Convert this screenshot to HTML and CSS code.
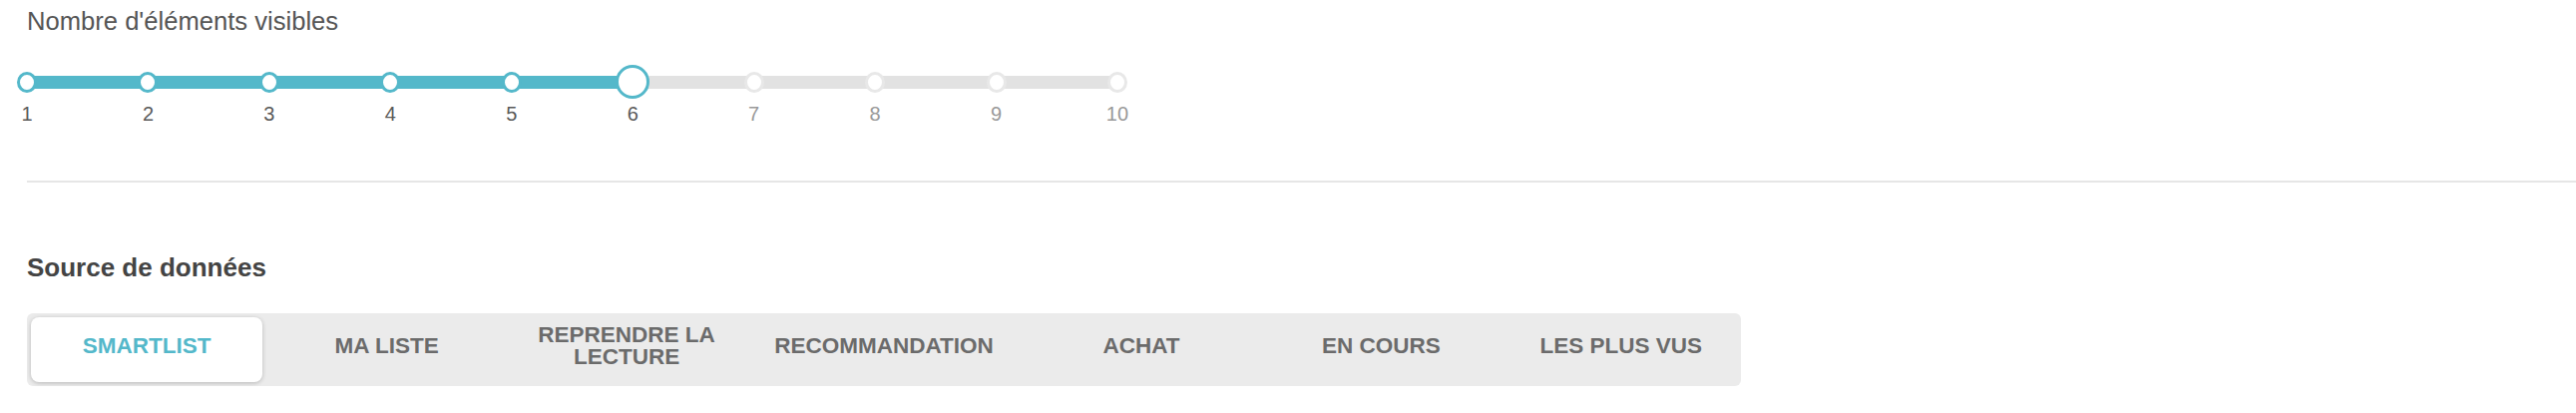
FILE: index.html
```html
<!DOCTYPE html>
<html lang="fr">
  <head>
    <meta charset="UTF-8" />
    <meta name="viewport" content="width=device-width, initial-scale=1.0" />
    <title>Réglages</title>
    <link rel="stylesheet" href="styles.css">
  </head>
  <body>
    <div class="panel">
      <p class="label">Nombre d'éléments visibles</p>
      <div class="slider">
        <div class="track"></div>
        <div class="track-fill" style="width: calc((100% - 40px) * 5 / 9)"></div>
        <div class="stops">
          <div class="stop done"><span class="dot"></span><span class="num">1</span></div>
          <div class="stop done"><span class="dot"></span><span class="num">2</span></div>
          <div class="stop done"><span class="dot"></span><span class="num">3</span></div>
          <div class="stop done"><span class="dot"></span><span class="num">4</span></div>
          <div class="stop done"><span class="dot"></span><span class="num">5</span></div>
          <div class="stop current"><span class="dot"></span><span class="num">6</span></div>
          <div class="stop"><span class="dot"></span><span class="num">7</span></div>
          <div class="stop"><span class="dot"></span><span class="num">8</span></div>
          <div class="stop"><span class="dot"></span><span class="num">9</span></div>
          <div class="stop"><span class="dot"></span><span class="num">10</span></div>
        </div>
      </div>

      <hr class="sep" />

      <h2>Source de données</h2>
      <div class="tabs">
        <div class="tab active"><span>Smartlist</span></div>
        <div class="tab"><span>Ma liste</span></div>
        <div class="tab"><span>Reprendre la lecture</span></div>
        <div class="tab"><span>Recommandation</span></div>
        <div class="tab"><span>Achat</span></div>
        <div class="tab"><span>En cours</span></div>
        <div class="tab"><span>Les plus vus</span></div>
      </div>
    </div>
  </body>
</html>
```

FILE: styles.css
```css
html,
body {
  font-family: 'Liberation Sans', Arial, 'Helvetica Neue', sans-serif;
  margin: 0;
  padding: 0;
  background: #fff;
}
.panel {
  padding: 6px 0 0 27px;
}
.label {
  margin: 0;
  font-size: 25.6px;
  line-height: 30px;
  color: #555;
}
.slider {
  position: relative;
  width: 1133px;
  margin: 29px 0 0 -20px;
}
.track,
.track-fill {
  position: absolute;
  left: 20px;
  top: 10.5px;
  height: 13px;
  background: #e2e2e2;
}
.track {
  right: 20px;
}
.track-fill {
  background: #54b8ca;
}
.stops {
  position: relative;
  display: flex;
  justify-content: space-between;
}
.stop {
  width: 40px;
  display: flex;
  flex-direction: column;
  align-items: center;
}
.dot {
  display: flex;
  align-items: center;
  justify-content: center;
  height: 34px;
}
.dot::before {
  content: '';
  box-sizing: border-box;
  width: 20px;
  height: 21px;
  border-radius: 50%;
  background: #fff;
  border: 3px solid #e8e8e8;
}
.done .dot::before {
  border-color: #54b8ca;
}
.current .dot::before {
  width: 34px;
  height: 34px;
  border: 3.5px solid #54b8ca;
}
.num {
  margin-top: 4px;
  font-size: 20px;
  line-height: 23px;
  color: #999;
}
.done .num,
.current .num {
  color: #5a5a5a;
}
.sep {
  margin: 55px 0 0 0;
  border: 0;
  border-top: 2px solid #e6e6e6;
  height: 0;
}
h2 {
  margin: 70px 0 0 0;
  font-size: 26px;
  line-height: 31px;
  font-weight: 600;
  color: #444;
}
.tabs {
  display: flex;
  width: 1718px;
  height: 73px;
  margin-top: 30px;
  background: #ebebeb;
  border-radius: 6px;
}
.tab {
  flex: 1;
  margin: 4px;
  display: flex;
  align-items: center;
  justify-content: center;
  padding: 0 24px 7px 24px;
  border-radius: 8px;
  text-align: center;
  text-transform: uppercase;
  font-weight: bold;
  font-size: 22.5px;
  line-height: 22px;
  color: #6b6b6b;
}
.tab.active {
  background: #fff;
  color: #54b8ca;
  box-shadow: 0 1px 4px rgba(0, 0, 0, 0.22);
}
```
